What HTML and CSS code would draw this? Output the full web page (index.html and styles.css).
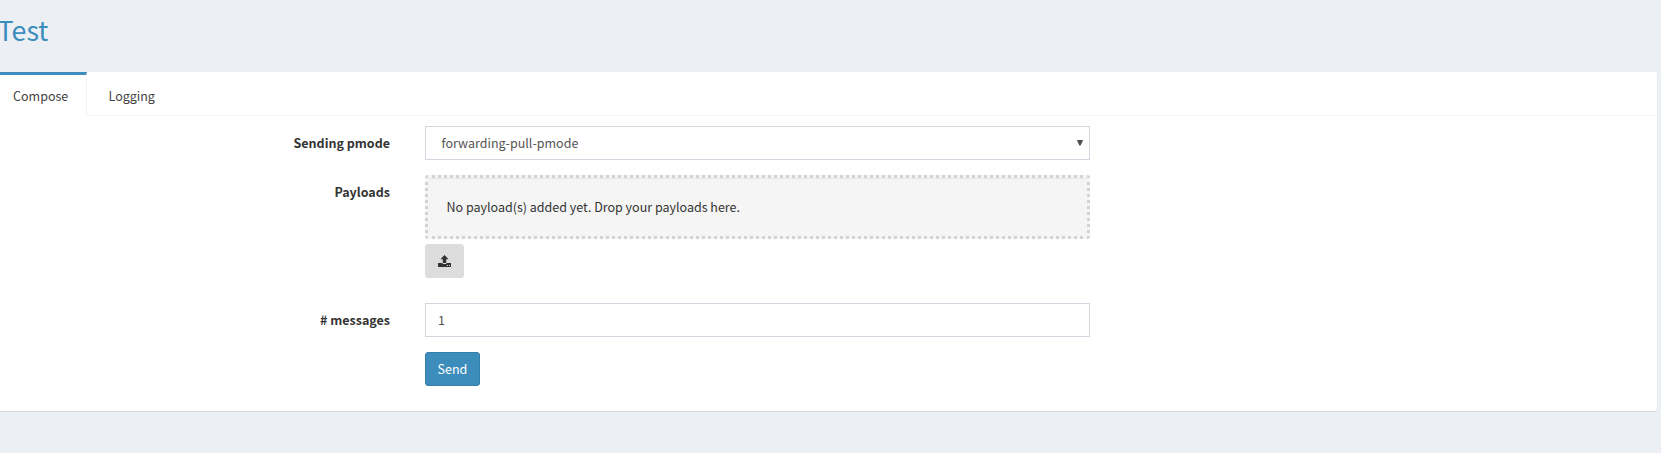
FILE: index.html
```
<!DOCTYPE html>
<html lang="en">
<head>
<meta charset="utf-8">
<title>Test</title>
<link rel="stylesheet" href="styles.css">
</head>
<body>
<h1 class="page-title">Test</h1>
<main class="panel">
  <nav class="tabs">
    <a class="tab tab-active">Compose</a>
    <a class="tab">Logging</a>
  </nav>
  <form class="form">
    <div class="row row-select">
      <label class="label">Sending pmode</label>
      <div class="control select"><span>forwarding-pull-pmode</span>
        <svg class="caret" width="6" height="6" viewBox="0 0 6 6"><path d="M.2 0h5.600v1L3.600 5.500H2.400L.2 1z" fill="#505050"/></svg>
      </div>
    </div>
    <div class="row row-payloads">
      <label class="label">Payloads</label>
      <div class="field">
        <div class="dropzone">No payload(s) added yet. Drop your payloads here.</div>
        <button type="button" class="btn btn-upload" aria-label="Upload">
          <svg width="13" height="12" viewBox="0 0 13 12" fill="#333"><path d="M6.500 0 10.500 4.300H8.200V8H4.800V4.300H2.500z"/><path fill-rule="evenodd" d="M0 8h4.200c.2.6.7.9 1.300.9h2c.6 0 1.100-.3 1.300-.9H13V12H0zM9 10v1h1v-1zm2 0v1h1v-1z"/></svg>
        </button>
      </div>
    </div>
    <div class="row row-messages">
      <label class="label">#&nbsp;messages</label>
      <div class="control">1</div>
    </div>
    <div class="row row-send">
      <span class="label"></span>
      <button type="button" class="btn btn-send">Send</button>
    </div>
  </form>
</main>
</body>
</html>
```
FILE: styles.css
```
* { box-sizing: border-box; }
body {
  margin: 0;
  height: 453px;
  overflow: hidden;
  background: #ecf0f5;
  color: #333;
  font-family: "Noto Sans CJK SC", "Noto Sans", sans-serif;
  font-size: 12.5px;
  line-height: 20px;
}
.page-title {
  margin: 0;
  height: 72px;
  padding-top: 14px;
  font-size: 26.8px;
  font-weight: 400;
  line-height: 32px;
  text-indent: -2.5px;
  color: #3c8dbc;
}
.panel {
  width: 1657px;
  height: 339px;
  background: #fff;
  border-radius: 0 3px 3px 0;
  box-shadow: 0 1px 1px rgba(0, 0, 0, .1);
}
.tabs {
  display: flex;
  height: 44px;
  border-bottom: 1px solid #f4f4f4;
}
.tab {
  height: 44px;
  padding: 11px 16px 0 21.5px;
  border-top: 3px solid transparent;
  color: #444;
}
.tab-active {
  width: 87px;
  padding-left: 13px;
  padding-right: 0;
  background: #fff;
  border-top-color: #3c8dbc;
  border-right: 1px solid #f4f4f4;
}
.form { padding-top: 10px; }
.row { display: flex; gap: 35px; align-items: flex-start; margin-bottom: 15px; }
.label {
  width: 390px;
  padding-top: 7px;
  text-align: right;
  font-weight: 700;
}
.control {
  display: flex;
  align-items: center;
  width: 665px;
  height: 34px;
  padding: 0 12px;
  border: 1px solid #d2d6de;
  background: #fff;
  color: #555;
}
.select { justify-content: space-between; padding: 0 6px 0 15.500px; }
.caret { margin-bottom: 1px; }
.field { width: 665px; }
.dropzone {
  height: 64px;
  padding: 19px 18.500px;
  border: 3px dotted #d3d3d3;
  border-radius: 3px;
  background: #f5f5f5;
  box-shadow: inset 0 1px 1px rgba(0, 0, 0, .05);
}
.btn {
  display: flex;
  align-items: center;
  justify-content: center;
  height: 34px;
  padding: 0;
  border: 1px solid #ddd;
  border-radius: 3px;
  font: inherit;
}
.btn-upload { width: 39px; margin-top: 5px; background: #ddd; }
.row-payloads { margin-bottom: 25px; }
.btn-send { width: 55px; background: #3c8dbc; border-color: #367fa9; color: #fff; }
```
